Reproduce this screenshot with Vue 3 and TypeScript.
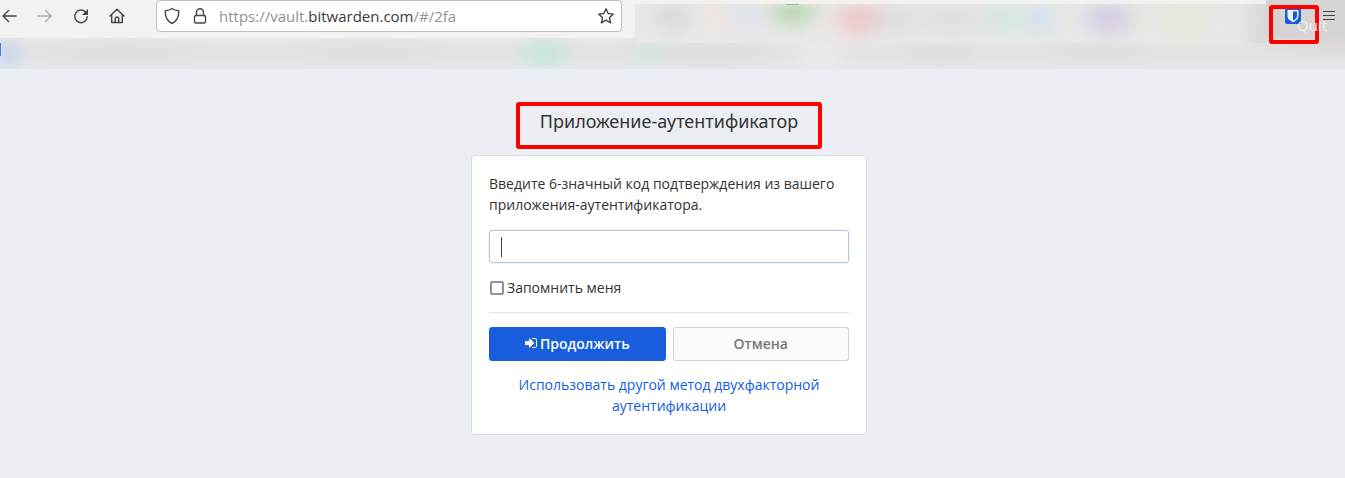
<script setup lang="ts">
import { ref } from 'vue'

const code = ref('')
const remember = ref(false)
</script>

<template>
  <div class="page">
    <header class="browser">
      <div class="toolbar">
        <nav class="nav" aria-label="Navigation">
          <button type="button" class="icon-btn" aria-label="Back">
            <svg width="18" height="18" viewBox="0 0 18 18"><path d="M16 9H3M8.500 3.500L3 9l5.500 5.500" /></svg>
          </button>
          <button type="button" class="icon-btn dim" aria-label="Forward">
            <svg width="18" height="18" viewBox="0 0 18 18"><path d="M2 9h13M9.500 3.500L15 9l-5.500 5.500" /></svg>
          </button>
          <button type="button" class="icon-btn" aria-label="Reload">
            <svg width="18" height="18" viewBox="0 0 18 18"><path d="M14 5.500A6.300 6.300 0 1 0 15.300 9.800" /><path class="solid" d="M16 2v6h-6z" /></svg>
          </button>
          <button type="button" class="icon-btn" aria-label="Home">
            <svg width="18" height="18" viewBox="0 0 18 18"><path d="M2 9l7-6.700L16 9M3.700 7.800v7.700h10.600V7.800M7.300 15.300v-4.100q0-1 1-1h1.400q1 0 1 1v4.100" /></svg>
          </button>
        </nav>
        <div class="address">
          <svg width="18" height="18" viewBox="0 0 18 18"><path d="M9 1.500C7 3 4.700 3.500 2.300 3.700C2 9.500 3.800 14 9 16.500c5.200-2.500 7-7 6.700-12.800C13.300 3.500 11 3 9 1.500z" /></svg>
          <svg width="18" height="18" viewBox="0 0 18 18"><rect x="3.500" y="8.500" width="11" height="7.500" rx="1.500" /><path d="M5.500 8.500V5.300a3.500 3.500 0 0 1 7 0v3.200" /></svg>
          <span class="url">https://vault.<b>bitwarden.com</b>/#/2fa</span>
          <button type="button" class="icon-btn" aria-label="Bookmark">
            <svg width="18" height="18" viewBox="0 0 18 18"><path d="M9 1.700l2.200 4.800 5.200.6-3.900 3.500 1.100 5.200L9 13.200l-4.600 2.600 1.100-5.200L1.600 7.100l5.200-.6z" /></svg>
          </button>
        </div>
        <div class="extensions"></div>
        <div class="corner">
          <button type="button" class="vault" aria-label="Bitwarden">
            <svg width="16" height="15" viewBox="0 1 16 15">
              <rect width="16" height="16" rx="2" fill="#175ddc" />
              <path d="M2.500 2h11v6c0 3-2.500 4.700-5.500 6.200C5 12.700 2.500 11 2.500 8z" fill="#eef1f6" />
              <path d="M8 3.500h4V8c0 2-1.500 3.300-4 4.500z" fill="#1b57c4" />
            </svg>
            <span class="quit">Quit</span>
          </button>
          <button type="button" class="menu" aria-label="Menu">
            <svg width="12" height="12" viewBox="0 0 12 12"><path d="M0 1.500h12M0 5.500h12M0 9.500h12" /></svg>
          </button>
        </div>
      </div>
      <div class="bookmarks"></div>
    </header>

    <main class="content">
      <h1>Приложение-аутентификатор</h1>
      <form class="card" @submit.prevent>
        <label class="prompt" for="code">Введите 6-значный код подтверждения из вашего приложения-аутентификатора.</label>
        <div class="field">
          <input id="code" v-model="code" type="text" inputmode="numeric" autocomplete="one-time-code" />
        </div>
        <label class="remember"><input v-model="remember" type="checkbox" />Запомнить меня</label>
        <hr />
        <div class="actions">
          <button type="submit" class="btn primary">
            <svg width="12" height="12" viewBox="0 128 1536 1280"><path d="M1184 768q0 26-19 45l-544 544q-19 19-45 19t-45-19-19-45v-288H64q-26 0-45-19t-19-45V576q0-26 19-45t45-19h448V224q0-26 19-45t45-19 45 19l544 544q19 19 19 45zm352-352v704q0 119-84.500 203.500T1248 1408H928q-13 0-22.500-9.500T896 1376q0-4-1-20t-.5-26.500 3-23.500 10-19.500T928 1280h320q66 0 113-47t47-113V416q0-66-47-113t-113-47H936l-11.500-1-11.500-3-8-5.500-7-9-2-13.500q0-4-1-20t-.5-26.500 3-23.500 10-19.500T928 128h320q119 0 203.500 84.500T1536 416z" /></svg>
            Продолжить
          </button>
          <button type="button" class="btn">Отмена</button>
        </div>
        <a href="#/2fa-options">Использовать другой метод двухфакторной аутентификации</a>
      </form>
    </main>
  </div>
</template>

<style>
body {
  margin: 0;
  background: #ebeef3;
}
</style>

<style scoped>
.page {
  min-height: 100vh;
  background: #ebeef3;
  color: #333;
  font: 14px/21px "Open Sans", "Noto Sans", sans-serif;
}
button {
  font: inherit;
  cursor: pointer;
}
.browser {
  background: #f4f2f0;
}
.toolbar {
  display: flex;
  align-items: flex-start;
  height: 38px;
}
.nav {
  display: flex;
  flex: none;
  gap: 18px;
  width: 156px;
  padding-top: 7px;
  box-sizing: border-box;
}
.icon-btn {
  display: flex;
  padding: 0;
  border: 0;
  background: none;
}
.dim {
  opacity: 0.4;
}
.toolbar svg {
  display: block;
  flex: none;
}
.nav svg,
.address svg,
.menu svg {
  fill: none;
  stroke: #454545;
  stroke-width: 1.4;
  stroke-linecap: round;
  stroke-linejoin: round;
}
.menu svg {
  stroke-width: 1;
  stroke-linecap: butt;
}
.nav .solid {
  fill: #454545;
  stroke: none;
}
.address {
  display: flex;
  flex: 0 1 466px;
  align-items: center;
  gap: 10px;
  box-sizing: border-box;
  height: 32px;
  margin-right: 13px;
  padding: 0 6px;
  border: 1px solid #c4bfba;
  border-radius: 4px;
  background: #fff;
}
.url {
  flex: 1;
  color: #929292;
  font-size: 15px;
  white-space: nowrap;
}
.url b {
  color: #3c3c3c;
  font-weight: 400;
}
.extensions,
.bookmarks {
  position: relative;
  overflow: hidden;
}
.extensions {
  z-index: 1;
  flex: 1;
  height: 39px;
  margin-top: 4px;
  background: linear-gradient(90deg, #e9e8e6 95%, #d9d8d6);
}
.extensions::before,
.bookmarks::before {
  position: absolute;
  inset: 0;
  filter: blur(6px);
  opacity: 0.65;
  content: "";
}
.extensions::before {
  background:
    radial-gradient(26px 28px at 6% 12px, #cfcfcd, transparent),
    radial-gradient(22px 28px at 12% 12px, #f2e5e0, transparent),
    radial-gradient(26px 28px at 18% 12px, #d8e0f2, transparent),
    radial-gradient(34px 30px at 25% 2px, #8fc585, transparent),
    radial-gradient(34px 30px at 35.500% 13px, #f0b0b4, transparent),
    radial-gradient(28px 30px at 41% 13px, #d5d8de, transparent),
    radial-gradient(70px 26px at 50% 14px, #dadad8, transparent),
    radial-gradient(28px 32px at 58.500% 12px, #c0ebdc, transparent),
    radial-gradient(28px 30px at 64% 12px, #c8dcf5, transparent),
    radial-gradient(36px 32px at 75% 12px, #c8b8df, transparent),
    radial-gradient(36px 30px at 87% 12px, #e3ebcc, transparent),
    radial-gradient(32px 30px at 94% 16px, #e1ebe6, transparent);
}
.extensions::after {
  position: absolute;
  top: 0;
  left: 24%;
  width: 13px;
  height: 1px;
  background: #8bc48c;
  content: "";
}
.corner {
  position: relative;
  z-index: 2;
  display: flex;
  flex: none;
  align-items: flex-start;
  gap: 4px;
  box-sizing: border-box;
  width: 79px;
  height: 38px;
  padding: 5px 0 0 3px;
  background: #d7d5d3;
}
.vault {
  position: relative;
  display: flex;
  align-items: flex-start;
  box-sizing: border-box;
  width: 50px;
  height: 39px;
  padding: 0 0 0 12px;
  border: 4px solid #fe0000;
  border-radius: 3px;
  background: none;
}
.quit {
  position: absolute;
  top: 6px;
  left: 24px;
  color: #f2f1f0;
  font-size: 15px;
}
.menu {
  position: relative;
  padding: 5px 0;
  border: 0;
  background: none;
}
.bookmarks {
  height: 31px;
  background:
    radial-gradient(100px 24px at 1335px 0, #d7d6d4, transparent),
    linear-gradient(#e8e7e5, #e3e3e3 50%, #e6e8ea);
}
.bookmarks::before {
  background:
    radial-gradient(28px 34px at 2px 16px, #b0ccf4, transparent),
    radial-gradient(34px 28px at 545px 14px, #b4e6d5, transparent),
    radial-gradient(28px 24px at 647px 14px, #cae6db, transparent),
    radial-gradient(30px 30px at 820px 12px, #f2f2f2, transparent),
    radial-gradient(100px 20px at 120px 16px, #dbdbdb, transparent),
    radial-gradient(90px 20px at 370px 16px, #dbdbdb, transparent),
    radial-gradient(80px 20px at 710px 16px, #d8d8d8, transparent),
    radial-gradient(50px 20px at 940px 16px, #dadada, transparent),
    radial-gradient(70px 20px at 1100px 14px, #dbdbdb, transparent);
}
.bookmarks::after {
  position: absolute;
  top: 5px;
  left: 0;
  width: 1px;
  height: 13px;
  background: #3b82ed;
  content: "";
}
.content {
  display: flex;
  flex-direction: column;
  align-items: center;
  gap: 6px;
  padding: 33px 7px 43px 0;
}
h1 {
  box-sizing: border-box;
  width: 306px;
  max-width: 100%;
  margin: 0;
  padding-bottom: 8px;
  border: 4px solid #fe0000;
  border-radius: 3px;
  font-family: "Noto Sans", "Open Sans", sans-serif;
  font-size: 18px;
  font-weight: 400;
  line-height: 31px;
  text-align: center;
}
.card {
  box-sizing: border-box;
  width: 396px;
  max-width: 100%;
  padding: 17px 17px 18px;
  border: 1px solid #dcdcdc;
  border-radius: 4px;
  background: #fff;
}
.prompt {
  display: block;
  margin-bottom: 15px;
}
.field {
  position: relative;
  margin-bottom: 14px;
}
.field::after {
  position: absolute;
  top: 7px;
  left: 12px;
  width: 1px;
  height: 20px;
  background: #3c4049;
  content: "";
}
.field input {
  display: block;
  box-sizing: border-box;
  width: 100%;
  height: 33px;
  padding: 0 12px;
  border: 1px solid #b4c5e4;
  border-radius: 3px;
  outline: 0;
  box-shadow: 0 0 2px #ccdaf4;
  caret-color: transparent;
  font: inherit;
}
.remember {
  display: flex;
  align-items: center;
  gap: 3px;
}
.remember input {
  appearance: none;
  box-sizing: border-box;
  width: 14px;
  height: 14px;
  margin: 0 0 0 1px;
  border: 2px solid #8f8f9d;
  border-radius: 2px;
  background: #fff;
}
.remember input:checked {
  background: #175ddc;
}
hr {
  height: 1px;
  margin: 14px 0;
  border: 0;
  background: #e5e5e5;
}
.actions {
  display: grid;
  grid-template-columns: 1fr 1fr;
  gap: 7px;
  margin-bottom: 13px;
}
.btn {
  display: flex;
  align-items: center;
  justify-content: center;
  gap: 4px;
  height: 34px;
  padding: 0 0 2px;
  border: 1px solid #ced4da;
  border-radius: 3px;
  background: #fbfbfb;
  color: #777;
  font-weight: 600;
}
.primary {
  gap: 3px;
  border-color: #175ddc;
  background: #175ddc;
  color: #fff;
}
.btn svg {
  fill: #fff;
}
a {
  display: block;
  color: #175ddc;
  text-align: center;
  text-decoration: none;
}
</style>
